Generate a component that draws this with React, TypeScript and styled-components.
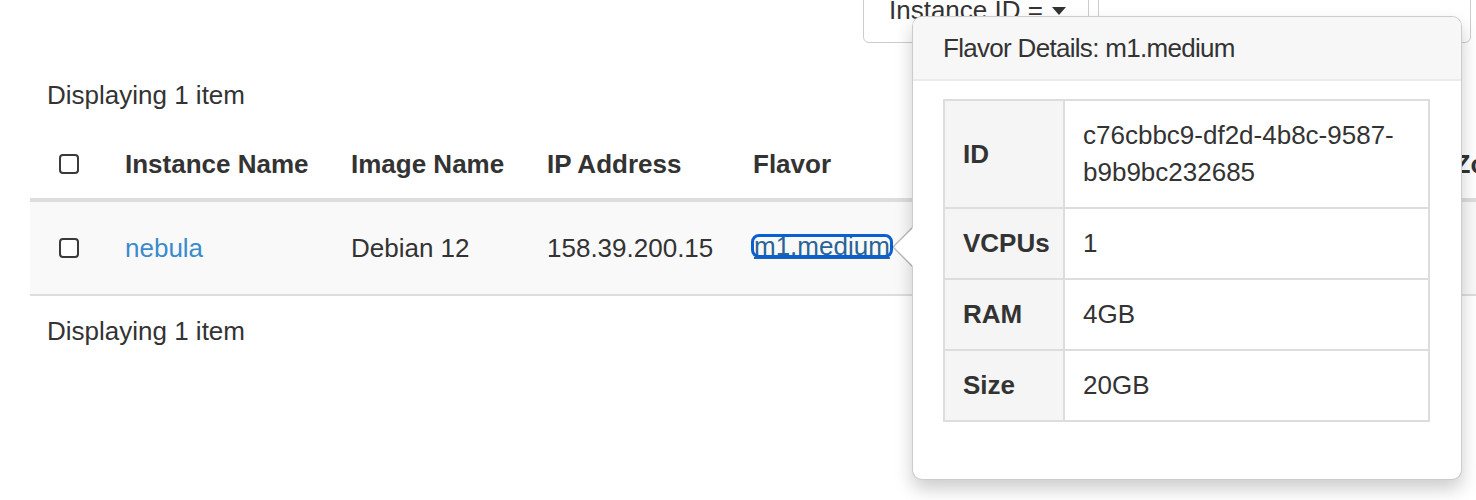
import React from "react";
import styled, { createGlobalStyle } from "styled-components";

const GlobalStyle = createGlobalStyle`
  html, body {
    margin: 0;
    padding: 0;
    background: #fff;
    overflow: hidden;
  }
  body {
    font-family: "Liberation Sans", Arial, Helvetica, sans-serif;
    font-size: 26px;
    line-height: 36px;
    color: #333;
  }
  * { box-sizing: border-box; }
`;

const Page = styled.div`
  position: relative;
  width: 1476px;
  height: 500px;
  overflow: hidden;
`;

const Toolbar = styled.div`
  display: flex;
  justify-content: flex-end;
  gap: 9px;
  margin-top: -17px;
  padding-right: 5px;
`;

const FilterButton = styled.button`
  display: inline-flex;
  align-items: center;
  gap: 9px;
  width: 226px;
  height: 60px;
  padding: 8px 25px 14px;
  border: 1px solid #ccc;
  border-radius: 0 0 0 6px;
  background: #fff;
  font: inherit;
  color: #333;
  white-space: nowrap;
`;

const Caret = styled.span`
  display: inline-block;
  width: 0;
  height: 0;
  margin-top: 2px;
  border-top: 8px solid #333;
  border-left: 7px solid transparent;
  border-right: 7px solid transparent;
`;

const FilterInput = styled.input`
  width: 373px;
  height: 60px;
  border: 1px solid #ccc;
  border-radius: 0 0 6px 0;
  background: #fff;
  font: inherit;
  padding: 0 14px;
`;

const TableWrap = styled.div`
  padding-left: 30px;
  margin-top: 17px;
`;

const Table = styled.table`
  border-collapse: collapse;
  table-layout: fixed;
  width: 1567px;
`;

const Col = styled.col<{ $w: number }>`
  width: ${(p) => p.$w}px;
`;

const CountCell = styled.td`
  padding: 17px 17px 16px;
  text-align: left;
`;

const Th = styled.th<{ $pl?: number }>`
  padding: 17px 14px 16px;
  padding-left: ${(p) => p.$pl ?? 14}px;
  text-align: left;
  font-weight: bold;
  white-space: nowrap;
  overflow: visible;
  vertical-align: middle;
  border-bottom: 4px solid #ddd;
`;

const BodyRow = styled.tr`
  background: #f9f9f9;
`;

const Td = styled.td<{ $pl?: number }>`
  padding: 28px 14px;
  padding-left: ${(p) => p.$pl ?? 14}px;
  white-space: nowrap;
  vertical-align: middle;
  border-bottom: 2px solid #ddd;
`;

const Check = styled.input.attrs({ type: "checkbox" })`
  appearance: none;
  -webkit-appearance: none;
  display: block;
  width: 20px;
  height: 20px;
  margin: 8px 0;
  border: 2px solid #3a3a3a;
  border-radius: 4px;
  background: #fff;
`;

const NameLink = styled.a`
  color: #3b8bcc;
  text-decoration: none;
`;

const FocusLink = styled.a`
  display: inline-block;
  line-height: 20px;
  vertical-align: 2px;
  padding: 0 1px;
  color: #2a6496;
  text-decoration: underline;
  outline: 3px solid #0a60d2;
  outline-offset: -1px;
  border-radius: 6px;
`;

const Popover = styled.div`
  position: absolute;
  left: 912px;
  top: 16px;
  width: 550px;
  background: #fff;
  border: 1px solid rgba(0, 0, 0, 0.2);
  border-radius: 10px;
  box-shadow: 0 9px 18px rgba(0, 0, 0, 0.2);
  z-index: 10;
`;

const Arrow = styled.div`
  position: absolute;
  left: -21px;
  top: 210px;
  width: 0;
  height: 0;
  border-style: solid;
  border-width: 20px 20px 20px 0;
  border-color: transparent rgba(0, 0, 0, 0.25) transparent transparent;

  &::after {
    content: "";
    position: absolute;
    left: 2px;
    top: -19px;
    width: 0;
    height: 0;
    border-style: solid;
    border-width: 19px 19px 19px 0;
    border-color: transparent #fff transparent transparent;
  }
`;

const PopoverTitle = styled.h3`
  margin: 0;
  padding: 13px 30px;
  background: #f7f7f7;
  border-bottom: 2px solid #ebebeb;
  border-radius: 9px 9px 0 0;
  font-size: 26px;
  font-weight: normal;
  line-height: 36px;
  letter-spacing: -0.7px;
  color: #333;
`;

const PopoverBody = styled.div`
  padding: 18px 31px 57px 30px;
`;

const DetailTable = styled.table`
  width: 100%;
  border-collapse: collapse;
  table-layout: fixed;
  border: 2px solid #ddd;
`;

const DetailTh = styled.th`
  padding: 16px 18px;
  background: #f5f5f5;
  text-align: left;
  font-weight: bold;
  line-height: 37px;
  border: 2px solid #ddd;
  vertical-align: middle;
`;

const DetailTd = styled.td`
  padding: 16px 18px;
  line-height: 37px;
  border: 2px solid #ddd;
  vertical-align: middle;
`;

const columns = [
  { label: "Instance Name", w: 226 },
  { label: "Image Name", w: 196 },
  { label: "IP Address", w: 206 },
  { label: "Flavor", w: 181 },
  { label: "Key Pair", w: 180 },
  { label: "Status", w: 197 },
  { label: "Availability Zone", w: 300 },
];

const details: [string, string][] = [
  ["ID", "c76cbbc9-df2d-4b8c-9587-b9b9bc232685"],
  ["VCPUs", "1"],
  ["RAM", "4GB"],
  ["Size", "20GB"],
];

export default function App() {
  return (
    <Page>
      <GlobalStyle />
      <Toolbar>
        <FilterButton>
          Instance ID = <Caret />
        </FilterButton>
        <FilterInput aria-label="Filter" />
      </Toolbar>

      <TableWrap>
        <Table>
          <colgroup>
            <Col $w={81} />
            {columns.map((c) => (
              <Col key={c.label} $w={c.w} />
            ))}
          </colgroup>
          <thead>
            <tr>
              <CountCell colSpan={8}>Displaying 1 item</CountCell>
            </tr>
            <tr>
              <Th $pl={29}>
                <Check aria-label="Select all" />
              </Th>
              {columns.map((c) => (
                <Th key={c.label}>{c.label}</Th>
              ))}
            </tr>
          </thead>
          <tbody>
            <BodyRow>
              <Td $pl={29}>
                <Check aria-label="Select nebula" />
              </Td>
              <Td>
                <NameLink href="#">nebula</NameLink>
              </Td>
              <Td>Debian 12</Td>
              <Td>158.39.200.15</Td>
              <Td>
                <FocusLink href="#">m1.medium</FocusLink>
              </Td>
              <Td>-</Td>
              <Td>Active</Td>
              <Td>nova</Td>
            </BodyRow>
          </tbody>
          <tfoot>
            <tr>
              <CountCell colSpan={8}>Displaying 1 item</CountCell>
            </tr>
          </tfoot>
        </Table>
      </TableWrap>

      <Popover>
        <Arrow />
        <PopoverTitle>Flavor Details: m1.medium</PopoverTitle>
        <PopoverBody>
          <DetailTable>
            <colgroup>
              <Col $w={120} />
              <col />
            </colgroup>
            <tbody>
              {details.map(([k, v]) => (
                <tr key={k}>
                  <DetailTh>{k}</DetailTh>
                  <DetailTd>{v}</DetailTd>
                </tr>
              ))}
            </tbody>
          </DetailTable>
        </PopoverBody>
      </Popover>
    </Page>
  );
}
